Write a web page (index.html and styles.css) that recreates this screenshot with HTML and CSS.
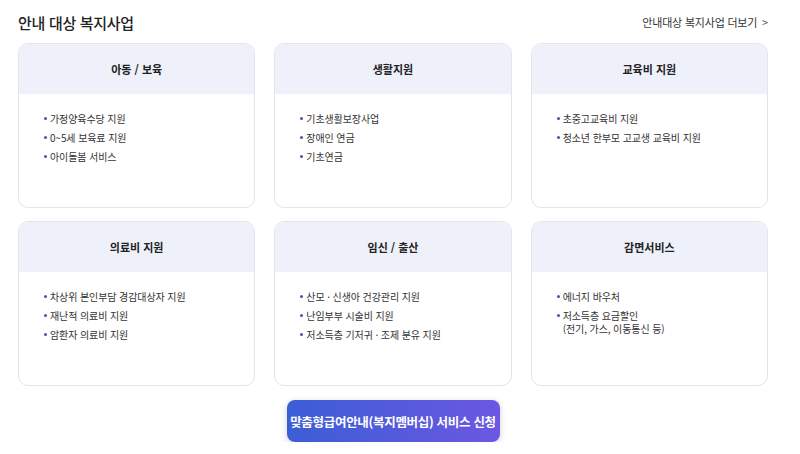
FILE: index.html
```html
<!DOCTYPE html>
<html lang="ko">
<head>
    <meta charset="UTF-8">
    <meta name="viewport" content="width=device-width, initial-scale=1.0">
    <title>안내 대상 복지사업</title>
    <link rel="stylesheet" href="styles.css">
</head>
<body>

    <div class="welfare">

        <!-- 상단 제목 -->
        <div class="welfare-head">
            <h2>안내 대상 복지사업</h2>
            <a class="more" href="#">안내대상 복지사업 더보기 <span class="arrow">&gt;</span></a>
        </div>

        <!-- 카드 목록 -->
        <div class="cards">
            <div class="card">
                <div class="card-title">아동 / 보육</div>
                <ul>
                    <li>가정양육수당 지원</li>
                    <li>0~5세 보육료 지원</li>
                    <li>아이돌봄 서비스</li>
                </ul>
            </div>
            <div class="card">
                <div class="card-title">생활지원</div>
                <ul>
                    <li>기초생활보장사업</li>
                    <li>장애인 연금</li>
                    <li>기초연금</li>
                </ul>
            </div>
            <div class="card">
                <div class="card-title">교육비 지원</div>
                <ul>
                    <li>초중고교육비 지원</li>
                    <li>청소년 한부모 고교생 교육비 지원</li>
                </ul>
            </div>
            <div class="card">
                <div class="card-title">의료비 지원</div>
                <ul>
                    <li>차상위 본인부담 경감대상자 지원</li>
                    <li>재난적 의료비 지원</li>
                    <li>암환자 의료비 지원</li>
                </ul>
            </div>
            <div class="card">
                <div class="card-title">임신 / 출산</div>
                <ul>
                    <li>산모 · 신생아 건강관리 지원</li>
                    <li>난임부부 시술비 지원</li>
                    <li>저소득층 기저귀 · 조제 분유 지원</li>
                </ul>
            </div>
            <div class="card">
                <div class="card-title">감면서비스</div>
                <ul>
                    <li>에너지 바우처</li>
                    <li>저소득층 요금할인<br>(전기, 가스, 이동통신 등)</li>
                </ul>
            </div>
        </div>

        <!-- 신청 버튼 -->
        <div class="apply">
            <a class="apply-btn" href="#">맞춤형급여안내(복지멤버십) 서비스 신청</a>
        </div>
    </div>

</body>
</html>
```

FILE: styles.css
```css
body {
    margin: 0;
    font-family: "Noto Sans CJK KR", "Noto Sans", sans-serif;
    color: #222;
    background: #fff;
}

.welfare {
    padding: 10px 32px 0 18px;
}

.welfare-head {
    display: flex;
    justify-content: space-between;
    align-items: center;
    height: 24px;
    margin-bottom: 9px;
}

.welfare-head h2 {
    margin: 0;
    font-size: 15px;
    font-weight: 500;
    letter-spacing: -0.3px;
}

.more {
    font-size: 11px;
    color: #333;
    text-decoration: none;
    letter-spacing: -0.2px;
}

.more .arrow {
    margin-left: 2px;
    color: #555;
}

.cards {
    display: grid;
    grid-template-columns: repeat(3, 1fr);
    column-gap: 19px;
    row-gap: 13px;
}

.card {
    height: 163px;
    border: 1px solid #e4e5ea;
    border-radius: 10px;
    overflow: hidden;
    background: #fff;
}

.card-title {
    height: 50px;
    display: flex;
    align-items: center;
    justify-content: center;
    background: #eff1fa;
    font-size: 11px;
    font-weight: 700;
    color: #222;
}

.card ul {
    list-style: none;
    margin: 0;
    padding: 18px 0 0 31px;
}

.card li {
    position: relative;
    font-size: 10px;
    line-height: 13px;
    color: #333;
    margin-bottom: 6px;
    letter-spacing: -0.1px;
}

/* 파란 점 */
.card li::before {
    content: "";
    position: absolute;
    left: -6px;
    top: 5px;
    width: 3px;
    height: 3px;
    border-radius: 50%;
    background: #4954b0;
}

.apply {
    display: flex;
    justify-content: center;
    padding-top: 14px;
}

.apply-btn {
    display: flex;
    align-items: center;
    justify-content: center;
    width: 213px;
    height: 42px;
    border-radius: 8px;
    background: linear-gradient(to right, #3b5ed6, #6c57e2);
    box-shadow: 0 2px 6px rgba(60, 70, 160, 0.25);
    color: #fff;
    font-size: 12.5px;
    font-weight: 700;
    text-decoration: none;
    letter-spacing: -0.3px;
}
```
